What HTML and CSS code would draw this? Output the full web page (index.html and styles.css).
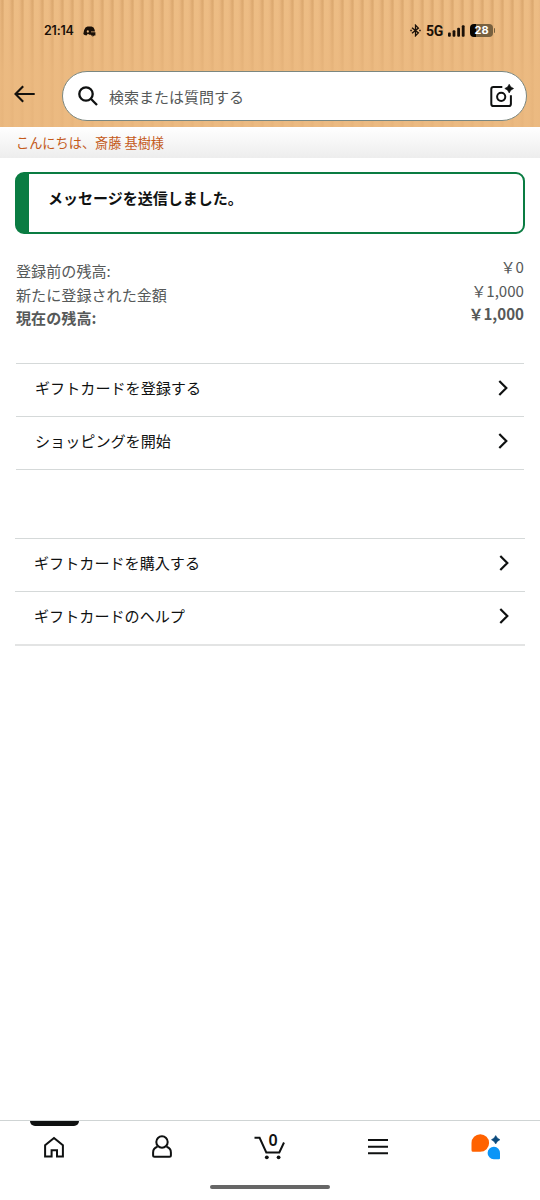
FILE: index.html
```html
<!DOCTYPE html>
<html lang="ja">
<head>
  <meta charset="UTF-8">
  <meta name="viewport" content="width=device-width, initial-scale=1.0">
  <title>ギフトカード</title>
  <link rel="stylesheet" href="styles.css">
</head>
<body>
  <div class="header">
    <div class="status">
      <div class="clock">21:14</div>
      <svg class="discord" width="14" height="12" viewBox="0 0 14 12">
        <path d="M2.5 1.4 L4.5 .6 H8.5 L10.5 1.4 Q11.8 3.2 12 5.5 H8 V8.8 H6.5 L4.8 7.8 L3.5 9.4 Q1.2 9.2 .3 8 Q.4 4 2.5 1.4Z" fill="#1a1008"/>
        <ellipse cx="4.8" cy="5.4" rx="1" ry="1.2" fill="#ebb980"/>
        <path d="M8 6.3 H12.4 V9.6 H11 L9.6 11 V9.6 H8Z" fill="#1a1008"/>
      </svg>
      <div class="statusRight">
        <svg width="11" height="13" viewBox="0 0 11 13" fill="none" stroke="#1a1008" stroke-width="1.3">
          <path d="M2 3.7 L8.4 8.9 L5.5 11.8 V1.2 L8.4 4.1 L2 9.3"/>
          <path d="M.3 6.5 h1.5 M9.2 6.5 h1.5"/>
        </svg>
        <div class="network">5G</div>
        <svg class="signal" width="17" height="12" viewBox="0 0 17 12" fill="#1a1008">
          <rect x="0" y="7.5" width="2.8" height="4.3" rx="1"/>
          <rect x="4.6" y="5.2" width="2.8" height="6.6" rx="1"/>
          <rect x="9.2" y="2.8" width="2.8" height="9" rx="1"/>
          <rect x="13.8" y=".3" width="2.8" height="11.5" rx="1"/>
        </svg>
        <div class="battery">28</div>
        <div class="batteryCap"></div>
      </div>
    </div>
    <div class="searchRow">
      <svg class="back" width="22" height="18" viewBox="0 0 22 18" fill="none" stroke="#14110d" stroke-width="2.1">
        <path d="M9.2 1.2 L1.5 9 L9.2 16.8 M1.5 9 H20.7"/>
      </svg>
      <div class="search">
        <svg width="20" height="20" viewBox="0 0 20 20" fill="none" stroke="#0f1111" stroke-width="2.3">
          <circle cx="8" cy="8" r="6.7"/>
          <path d="M12.8 12.8 L19 19"/>
        </svg>
        <div class="placeholder">検索または質問する</div>
        <svg width="24" height="24" viewBox="0 0 24 24" fill="none" stroke="#0f1111" stroke-width="2">
          <path d="M12.3 3 H3.4 Q1.3 3 1.3 5.1 V20 Q1.3 22.1 3.4 22.1 H18.8 Q20.9 22.1 20.9 20 V11.3"/>
          <circle cx="11.2" cy="12.8" r="4.1"/>
          <path d="M19.2 .2 Q20.2 3.4 23.6 4.5 Q20.2 5.6 19.2 9 Q18.2 5.6 14.8 4.5 Q18.2 3.4 19.2 .2Z" fill="#0f1111" stroke="#0f1111" stroke-width=".6"/>
        </svg>
      </div>
    </div>
  </div>

  <div class="greeting">こんにちは、斎藤 基樹様</div>

  <div class="page">
    <div class="alert">メッセージを送信しました。</div>

    <div class="balance">
      <div class="labels">
        <div>登録前の残高:</div>
        <div>新たに登録された金額</div>
        <div class="total">現在の残高:</div>
      </div>
      <div class="amounts">
        <div>￥0</div>
        <div>￥1,000</div>
        <div class="total">￥1,000</div>
      </div>
    </div>

    <div class="list">
      <div class="item">
        <span>ギフトカードを登録する</span>
        <svg class="chevron" viewBox="0 0 10 16"><path d="M1.3 1 L8.3 8 L1.3 15"/></svg>
      </div>
      <div class="item">
        <span>ショッピングを開始</span>
        <svg class="chevron" viewBox="0 0 10 16"><path d="M1.3 1 L8.3 8 L1.3 15"/></svg>
      </div>
    </div>

    <div class="list listWide">
      <div class="item">
        <span>ギフトカードを購入する</span>
        <svg class="chevron" viewBox="0 0 10 16"><path d="M1.3 1 L8.3 8 L1.3 15"/></svg>
      </div>
      <div class="item">
        <span>ギフトカードのヘルプ</span>
        <svg class="chevron" viewBox="0 0 10 16"><path d="M1.3 1 L8.3 8 L1.3 15"/></svg>
      </div>
    </div>
  </div>

  <div class="tabs">
    <div class="tab tabActive">
      <svg width="32" height="28" viewBox="0 0 32 28" fill="none" stroke="#0f1111" stroke-width="2">
        <path d="M7.1 23.5 V12.3 L16 5 L24.9 12.3 V23.5 H19 V17.3 H13.6 V23.5Z"/>
      </svg>
    </div>
    <div class="tab">
      <svg width="32" height="28" viewBox="0 0 32 28" fill="none" stroke="#0f1111" stroke-width="2">
        <circle cx="16" cy="9" r="5.7"/>
        <path d="M11.5 13.7 Q7.1 14.9 7.1 19.5 V22.3 Q7.1 23.8 8.6 23.8 H23.4 Q24.9 23.8 24.9 22.3 V19.5 Q24.9 14.9 20.5 13.7"/>
      </svg>
    </div>
    <div class="tab">
      <svg width="32" height="32" viewBox="0 -4 32 32" class="cart" fill="none" stroke="#0f1111" stroke-width="2">
        <path d="M.5 4.8 H5.6 L12.3 19.5 H25.3 L30 9.5"/>
        <circle cx="12.8" cy="24.3" r="1.9" fill="#0f1111" stroke="none"/>
        <circle cx="24.6" cy="24.3" r="1.9" fill="#0f1111" stroke="none"/>
        <text class="cartCount" x="19.2" y="13.2" text-anchor="middle">0</text>
      </svg>
    </div>
    <div class="tab">
      <svg width="32" height="28" viewBox="0 0 32 28" fill="none" stroke="#0f1111" stroke-width="2">
        <path d="M6 7 H26 M6 13.7 H26 M6 20.3 H26"/>
      </svg>
    </div>
    <div class="tab">
      <svg width="32" height="28" viewBox="0 0 32 28">
        <path d="M1.5 10 A8.8 8.8 0 1 1 10.3 18.8 H3 Q1.5 18.8 1.5 17.3Z" fill="#ff6200"/>
        <path d="M30 20.3 A6.2 6.2 0 1 0 23.8 26.2 H29 Q30 26.2 30 25.2Z" fill="#0a95f7"/>
        <path d="M25.7 2.5 Q26.9 5.5 30 6.7 Q26.9 7.9 25.7 11 Q24.5 7.9 21.4 6.7 Q24.5 5.5 25.7 2.5Z" fill="#0b4a7c" stroke="#0b4a7c" stroke-width=".5"/>
      </svg>
    </div>
  </div>
  <div class="homeBar"></div>
</body>
</html>
```

FILE: styles.css
```css
body {
  margin: 0;
  height: 1200px;
  display: flex;
  flex-direction: column;
  background: #fff;
  font-family: "Noto Sans CJK JP", sans-serif;
  font-size: 15.1px;
  color: #0f1111;
}
svg {
  display: block;
  flex: none;
}

/* ヘッダー */
.header {
  height: 127px;
  background:
    linear-gradient(rgba(235, 185, 128, 0), rgba(235, 185, 128, 0.5) 50px, rgba(235, 185, 128, 0.8) 75px),
    repeating-linear-gradient(90deg, #e9b780 0, #dca970 2px 3px, #edbd85 4.5px 8px, #e9b780 10px);
}
.status {
  display: flex;
  align-items: center;
  height: 61px;
  padding: 0 44px;
  color: #1a1008;
  font-family: Inter, sans-serif;
}
.clock {
  width: 39px;
  font-size: 12.5px;
  font-weight: 600;
  letter-spacing: -0.2px;
}
.discord {
  margin-top: 2px;
}
.statusRight {
  display: flex;
  align-items: center;
  margin-left: auto;
}
.network {
  width: 22px;
  margin-left: 5px;
  font-family: Roboto, sans-serif;
  font-size: 14px;
  font-weight: 700;
  letter-spacing: -0.3px;
}
.battery {
  width: 23px;
  height: 13px;
  margin-left: 5px;
  border-radius: 4px;
  background: linear-gradient(90deg, #080502 28%, #77603f 28%);
  color: #fff;
  font-size: 11px;
  font-weight: 700;
  line-height: 13px;
  text-align: center;
}
.batteryCap {
  width: 1px;
  height: 5px;
  margin: 0 1px;
  border-radius: 0 1px 1px 0;
  background: #77603f;
}

.searchRow {
  display: flex;
  align-items: center;
  padding: 10px 13px 0 14px;
}
.back {
  margin-top: -4px;
}
.search {
  flex: 1;
  display: flex;
  align-items: center;
  box-sizing: border-box;
  height: 50px;
  margin-left: 26px;
  padding: 0 12px 0 15px;
  border: 1px solid #7b8780;
  border-radius: 25px;
  background: #fff;
}
.placeholder {
  flex: 1;
  margin-left: 11px;
  font-size: 15px;
  color: #565959;
}

.greeting {
  height: 31px;
  padding-left: 16px;
  background: linear-gradient(#fff, #ededed);
  color: #c45a1a;
  font-size: 13.2px;
  line-height: 31px;
}

/* 本文 */
.page {
  flex: 1;
  padding: 14px 16px 0;
}
.alert {
  box-sizing: border-box;
  height: 62px;
  margin: 0 -1px;
  padding-left: 19px;
  border: 2px solid #0a7c42;
  border-left-width: 14px;
  border-radius: 9px;
  font-size: 15px;
  font-weight: 700;
  line-height: 47px;
}
.balance {
  display: flex;
  justify-content: space-between;
  margin-top: 25px;
  color: #565959;
  line-height: 23.6px;
}
.amounts {
  margin-top: -4px;
  text-align: right;
}
.total {
  font-weight: 700;
}

.list {
  margin-top: 33px;
  border-top: 1px solid #d5d9d9;
}
.item {
  display: flex;
  align-items: center;
  justify-content: space-between;
  box-sizing: border-box;
  height: 53px;
  padding: 0 16px 4px 19px;
  border-bottom: 1px solid #d5d9d9;
}
.item span {
  margin-bottom: 2px;
}
.chevron {
  width: 10px;
  height: 16px;
  fill: none;
  stroke: #0f1111;
  stroke-width: 2.2;
}
.listWide {
  margin: 68px -1px 0;
}
.listWide .item:last-child {
  height: 54px;
  border-bottom: 2px solid #e3e4e4;
}

/* 下部タブ */
.tabs {
  display: flex;
  height: 64px;
  border-top: 1px solid #cfd4d4;
}
.tab {
  flex: 1;
  display: flex;
  flex-direction: column;
  align-items: center;
  padding-top: 12px;
}
.tabActive {
  padding-top: 0;
}
.tabActive::before {
  content: "";
  width: 49px;
  height: 5px;
  margin-bottom: 7px;
  border-radius: 0 0 5px 5px;
  background: #0f1111;
}
.cart {
  margin-top: -4px;
  overflow: visible;
}
.cartCount {
  fill: #0f1111;
  stroke: none;
  font-family: "Noto Sans", sans-serif;
  font-size: 16px;
  font-weight: 600;
}
.homeBar {
  width: 120px;
  height: 4px;
  margin: 0 auto 11px;
  border-radius: 2px;
  background: #666;
}
```
